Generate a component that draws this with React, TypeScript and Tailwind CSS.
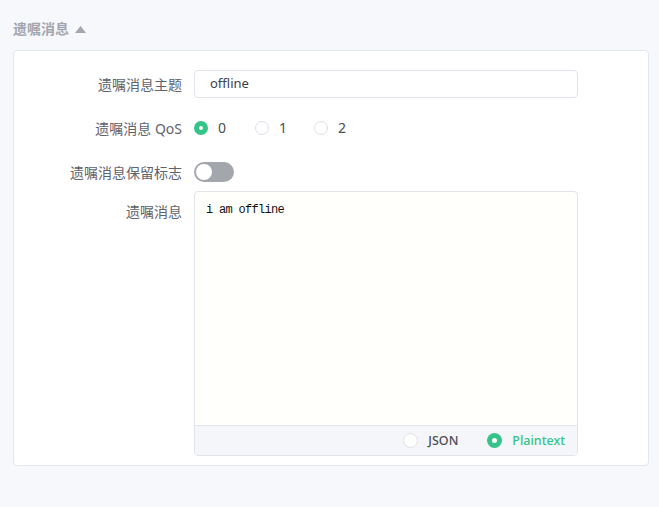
import React from "react";

const font = { fontFamily: '"Noto Sans", "Noto Sans CJK SC", sans-serif' };

function Radio({ checked, label, w }: { checked?: boolean; label: string; w: string }) {
  return (
    <div className={`flex items-center ${w}`}>
      {checked ? (
        <span className="w-[14px] h-[14px] rounded-full bg-[#34c388] flex items-center justify-center">
          <span className="w-[4px] h-[4px] rounded-full bg-white" />
        </span>
      ) : (
        <span className="w-[14px] h-[14px] rounded-full border border-[#dcdfe6] bg-white" />
      )}
      <span className="ml-[10px] text-[14px] leading-[20px] text-[#4a4e57]">{label}</span>
    </div>
  );
}

function FooterRadio({ checked, label }: { checked?: boolean; label: string }) {
  return (
    <div className="flex items-center">
      {checked ? (
        <span className="w-[15px] h-[15px] rounded-full bg-[#34c388] flex items-center justify-center">
          <span className="w-[5px] h-[5px] rounded-full bg-white" />
        </span>
      ) : (
        <span className="w-[15px] h-[15px] rounded-full border border-[#dcdfe6] bg-white" />
      )}
      <span className={`ml-[10px] text-[12.5px] font-medium leading-[20px] ${checked ? "text-[#34c388]" : "text-[#4a4e57]"}`}>{label}</span>
    </div>
  );
}

export default function App() {
  return (
    <div className="w-full h-[507px] bg-[#f7f8fc] pt-[19px] px-[13px]" style={font}>
      <div className="flex items-center h-[20px]">
        <span className="text-[14px] font-semibold text-[#a3a6ae] leading-[20px]">遗嘱消息</span>
        <svg width="11" height="7" viewBox="0 0 11 7" className="ml-[6px]">
          <polygon points="5.5,0 11,7 0,7" fill="#a3a6ae" />
        </svg>
      </div>
      <div className="mt-[11px] w-[636px] h-[416px] bg-white border border-[#e4e6ef] rounded-[4px] pt-[19px]">
        <div className="flex items-center h-[28px]">
          <div className="w-[168px] text-right text-[14px] text-[#5f636b]">遗嘱消息主题</div>
          <div className="ml-[12px] w-[384px] h-[28px] border border-[#e2e4ec] rounded-[4px] flex items-center pl-[15px] text-[13px] text-[#3e4149]">
            offline
          </div>
        </div>
        <div className="flex items-center h-[28px] mt-[16px]">
          <div className="w-[168px] text-right text-[14px] text-[#5f636b]">遗嘱消息 QoS</div>
          <div className="ml-[12px] flex items-center">
            <Radio checked label="0" w="w-[61px]" />
            <Radio label="1" w="w-[59px]" />
            <Radio label="2" w="w-[40px]" />
          </div>
        </div>
        <div className="flex items-center h-[28px] mt-[16px]">
          <div className="w-[168px] text-right text-[14px] text-[#5f636b]">遗嘱消息保留标志</div>
          <div className="ml-[12px] w-[40px] h-[20px] rounded-full bg-[#a3a6ad] flex items-center pl-[2px]">
            <span className="w-[16px] h-[16px] rounded-full bg-white" />
          </div>
        </div>
        <div className="flex items-start mt-[5px]">
          <div className="w-[168px] text-right text-[14px] text-[#5f636b] mt-[11px] leading-[20px]">遗嘱消息</div>
          <div className="ml-[12px] w-[384px] h-[265px] border border-[#e2e4ec] rounded-[4px] bg-[#fffffc] flex flex-col overflow-hidden">
            <div
              className="flex-1 pl-[11px] pt-[10px] text-[12px] leading-[16px] text-[#111] tracking-[-0.7px]"
              style={{ fontFamily: '"Liberation Mono", monospace' }}
            >
              i am offline
            </div>
            <div className="h-[30px] bg-[#f5f6fa] border-t border-[#e2e4ec] flex items-center justify-end pr-[12px] gap-[29px]">
              <FooterRadio label="JSON" />
              <FooterRadio checked label="Plaintext" />
            </div>
          </div>
        </div>
      </div>
    </div>
  );
}
